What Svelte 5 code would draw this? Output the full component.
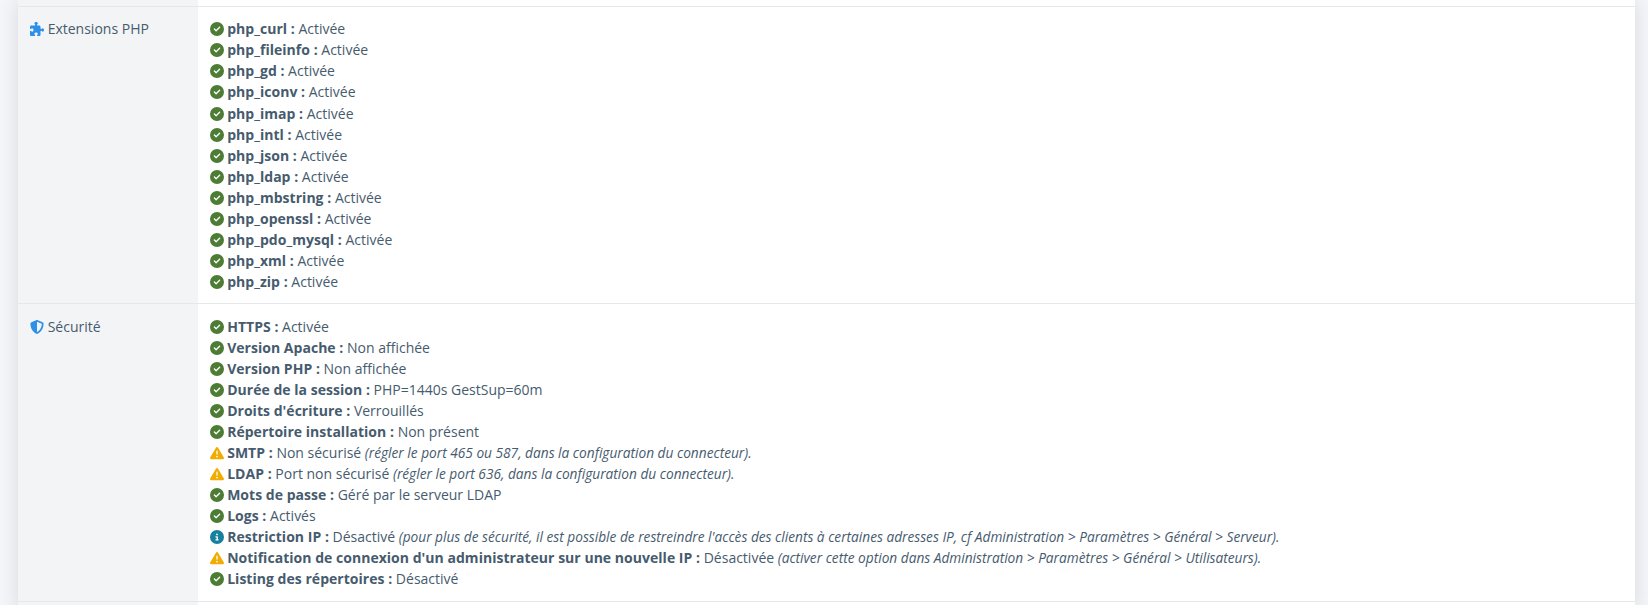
<script>
  const ICONS = {
    ok: { box: '0 0 512 512', d: 'M256 512A256 256 0 1 0 256 0a256 256 0 1 0 0 512zM369 209L241 337c-9.4 9.4-24.6 9.4-33.9 0l-64-64c-9.4-9.4-9.4-24.6 0-33.9s24.6-9.4 33.9 0l47 47L335 175c9.4-9.4 24.6-9.4 33.9 0s9.4 24.6 0 33.9z' },
    warn: { box: '0 0 512 512', d: 'M256 32c14.2 0 27.3 7.5 34.5 19.8l216 368c7.3 12.4 7.3 27.7 .2 40.1S486.3 480 472 480H40c-14.3 0-27.6-7.7-34.7-20.1s-7-27.8 .2-40.1l216-368C228.7 39.5 241.8 32 256 32zm0 128c-13.3 0-24 10.7-24 24V296c0 13.3 10.7 24 24 24s24-10.7 24-24V184c0-13.3-10.7-24-24-24zm32 224a32 32 0 1 0 -64 0 32 32 0 1 0 64 0z' },
    info: { box: '0 0 512 512', d: 'M256 512A256 256 0 1 0 256 0a256 256 0 1 0 0 512zM216 336h24V272H216c-13.3 0-24-10.7-24-24s10.7-24 24-24h48c13.3 0 24 10.7 24 24v88h8c13.3 0 24 10.7 24 24s-10.7 24-24 24H216c-13.3 0-24-10.7-24-24s10.7-24 24-24zm40-208a32 32 0 1 1 0 64 32 32 0 1 1 0-64z' }
  };
  const puzzle = 'M192 104.8c0-9.2-5.8-17.3-13.2-22.8C167.2 73.3 160 61.3 160 48c0-26.5 28.7-48 64-48s64 21.5 64 48c0 13.3-7.2 25.3-18.8 34c-7.4 5.5-13.2 13.6-13.2 22.8c0 12.8 10.4 23.2 23.2 23.2H336c26.5 0 48 21.5 48 48v56.8c0 12.8 10.4 23.2 23.2 23.2c9.2 0 17.3-5.8 22.8-13.2c8.7-11.6 20.7-18.8 34-18.8c26.5 0 48 28.7 48 64s-21.5 64-48 64c-13.3 0-25.3-7.2-34-18.8c-5.5-7.4-13.6-13.2-22.8-13.2c-12.8 0-23.2 10.4-23.2 23.2V464c0 26.5-21.5 48-48 48H279.2c-12.8 0-23.2-10.4-23.2-23.2c0-9.2 5.8-17.3 13.2-22.8c11.6-8.7 18.8-20.7 18.8-34c0-26.5-28.7-48-64-48s-64 21.5-64 48c0 13.3 7.2 25.3 18.8 34c7.4 5.5 13.2 13.6 13.2 22.8c0 12.8-10.4 23.2-23.2 23.2H48c-26.5 0-48-21.5-48-48V343.2C0 330.4 10.4 320 23.2 320c9.2 0 17.3 5.8 22.8 13.2C54.7 344.8 66.7 352 80 352c26.5 0 48-28.7 48-64s-21.5-64-48-64c-13.3 0-25.3 7.2-34 18.8C40.5 250.2 32.4 256 23.2 256C10.4 256 0 245.6 0 232.8V176c0-26.5 21.5-48 48-48H168.8c12.8 0 23.2-10.4 23.2-23.2z';
  const shield = 'M256 0c4.6 0 9.2 1 13.4 2.9L457.7 82.8c22 9.3 38.4 31 38.3 57.2c-.5 99.2-41.3 280.7-213.6 363.2c-16.7 8-36.1 8-52.8 0C57.3 420.7 16.5 239.2 16 140c-.1-26.2 16.3-47.9 38.3-57.2L242.7 2.9C246.8 1 251.4 0 256 0zm0 66.8V444.8C394 378 431.1 230.1 432 141.4L256 66.8l0 0z';

  const extensions = ['php_curl', 'php_fileinfo', 'php_gd', 'php_iconv', 'php_imap', 'php_intl', 'php_json', 'php_ldap', 'php_mbstring', 'php_openssl', 'php_pdo_mysql', 'php_xml', 'php_zip']
    .map((name) => ({ type: 'ok', name, value: 'Activée' }));

  const security = [
    { type: 'ok', name: 'HTTPS', value: 'Activée' },
    { type: 'ok', name: 'Version Apache', value: 'Non affichée' },
    { type: 'ok', name: 'Version PHP', value: 'Non affichée' },
    { type: 'ok', name: 'Durée de la session', value: 'PHP=1440s GestSup=60m' },
    { type: 'ok', name: "Droits d'écriture", value: 'Verrouillés' },
    { type: 'ok', name: 'Répertoire installation', value: 'Non présent' },
    { type: 'warn', name: 'SMTP', value: 'Non sécurisé', hint: '(régler le port 465 ou 587, dans la configuration du connecteur).' },
    { type: 'warn', name: 'LDAP', value: 'Port non sécurisé', hint: '(régler le port 636, dans la configuration du connecteur).' },
    { type: 'ok', name: 'Mots de passe', value: 'Géré par le serveur LDAP' },
    { type: 'ok', name: 'Logs', value: 'Activés' },
    { type: 'info', name: 'Restriction IP', value: 'Désactivé', hint: "(pour plus de sécurité, il est possible de restreindre l'accès des clients à certaines adresses IP, cf Administration > Paramètres > Général > Serveur)." },
    { type: 'warn', name: "Notification de connexion d'un administrateur sur une nouvelle IP", value: 'Désactivée', hint: '(activer cette option dans Administration > Paramètres > Général > Utilisateurs).' },
    { type: 'ok', name: 'Listing des répertoires', value: 'Désactivé' }
  ];

  const sections = [
    { label: 'Extensions PHP', icon: puzzle, box: '0 0 512 512', items: extensions },
    { label: 'Sécurité', icon: shield, box: '0 0 512 512', items: security }
  ];
</script>

<div class="page">
  <div class="card">
    <div class="row top"><div class="head"></div><div class="body"></div></div>
    {#each sections as section}
      <div class="row">
        <div class="head">
          <svg class="head-icon" viewBox={section.box}><path d={section.icon} /></svg>
          {section.label}
        </div>
        <div class="body">
          {#each section.items as item}
            <div class="line">
              <svg class="state {item.type}" viewBox={ICONS[item.type].box}><path d={ICONS[item.type].d} /></svg>
              <strong>{item.name} :</strong> {item.value}
              {#if item.hint}<em>{item.hint}</em>{/if}
            </div>
          {/each}
        </div>
      </div>
    {/each}
    <div class="row tail"><div class="head"></div><div class="body"></div></div>
  </div>
</div>

<style>
  :global(body) {
    margin: 0;
    background: #f4f6f9;
  }

  .page {
    height: 605px;
    overflow: hidden;
    padding: 0 13px 0 18px;
    font-family: "Open Sans", sans-serif;
    font-size: 14px;
    color: #465b6e;
  }

  .card {
    background: #fff;
    box-shadow: 0 0 20px rgba(0, 0, 0, 0.12);
  }

  .row {
    display: flex;
    border-bottom: 1px solid #e5e7eb;
  }

  .top {
    height: 5.82px;
  }

  .tail {
    height: 10px;
    border-bottom: 0;
  }

  .head {
    width: 156px;
    flex: none;
    padding: 11.5px 12px 0 12px;
    background: #f3f4f6;
    line-height: 21px;
    white-space: nowrap;
  }

  .top .head,
  .tail .head {
    padding: 0 12px;
  }

  .head-icon {
    width: 14px;
    height: 14px;
    vertical-align: -2px;
    fill: #2e8fe8;
  }

  .body {
    flex: 1;
    padding: 11.5px 12px 11.45px 11.5px;
  }

  .top .body,
  .tail .body {
    padding: 0;
  }

  .line {
    height: 21.05px;
    line-height: 21px;
    white-space: nowrap;
  }

  .state {
    width: 14px;
    height: 14px;
    vertical-align: -2px;
  }

  .ok { fill: #4d7c35; }
  .warn { fill: #f0ac00; }
  .info { fill: #17809f; }

  strong {
    font-weight: 700;
    letter-spacing: 0.03px;
  }

  em {
    font-size: 13.7px;
    font-style: italic;
  }
</style>
